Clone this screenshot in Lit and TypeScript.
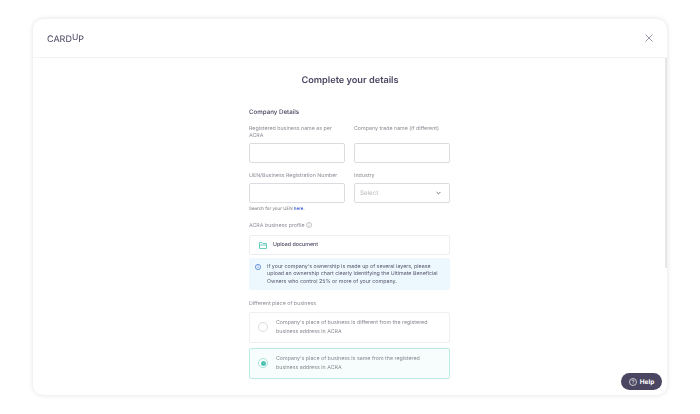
import { LitElement, html, css } from "lit";
import { customElement } from "lit/decorators.js";

@customElement("app-root")
export class AppRoot extends LitElement {
  static styles = css`
    :host { display: block; width: 700px; height: 414px; overflow: hidden; background: #fff; font-family: Inter, "Liberation Sans", sans-serif; color: #4a4560; position: relative; text-rendering: geometricPrecision; }
    .page { box-sizing: border-box; width: 700px; height: 414px; padding: 19px 33px; will-change: transform; }
    .modal { height: 376px; box-sizing: border-box; background: #fff; border-radius: 10px; box-shadow: 0 0 5px rgba(60,60,80,.16); display: flex; flex-direction: column; overflow: hidden; position: relative; }
    .head { height: 39px; flex: none; border-bottom: 1px solid #f3f3f5; box-sizing: border-box; display: flex; align-items: center; justify-content: space-between; padding: 0 14px; }
    .logo { font-size: 9px; color: #4a4560; display: flex; align-items: flex-start; line-height: 10px; font-weight: 400; padding-top: 3px; }
    .logo .u { transform: translateY(-2.500px); display: inline-block; font-size: 8.500px; }
    .close { display: block; }
    .scroll { flex: 1; position: relative; overflow: hidden; padding: 16px 0 0 216px; box-sizing: border-box; }
    .bar { position: absolute; right: 0; top: 0; width: 2px; height: 210px; background: #e6e6e8; }
    h1 { position: absolute; left: 0; right: 0; top: 16px; margin: 0; text-align: center; font-size: 9.200px; font-weight: 600; line-height: 14px; color: #4a4560; }
    .form { width: 201px; padding-top: 34px; }
    h2 { margin: 0 0 7.500px; font-size: 6.200px; font-weight: 500; line-height: 10px; color: #4a4560; }
    .grid { display: grid; grid-template-columns: 96px 96px; column-gap: 9px; }
    .field { display: flex; flex-direction: column; justify-content: flex-end; }
    .field.top { justify-content: space-between; }
    .label { font-size: 5.300px; line-height: 7.500px; color: #8a8a94; margin-bottom: 2.500px; }
    .input { height: 20px; box-sizing: border-box; border: 1px solid #dcdce0; border-radius: 2px; background: #fff; }
    .row2 { margin-top: 9.500px; }
    .select { display: flex; align-items: center; justify-content: space-between; padding: 1px 8px 0 5px; font-size: 6.200px; color: #b8b8bd; }
    .hint { font-size: 4.500px; line-height: 7px; color: #77777f; margin-top: 3px; }
    .hint a { color: #3d5bd0; font-weight: 500; }
    .acra { display: flex; align-items: center; gap: 1px; font-size: 5.300px; line-height: 8px; color: #8a8a94; margin-top: 9px; margin-bottom: 5px; }
    .acra svg { transform: translateY(-1px); }
    .upload { height: 20px; box-sizing: border-box; border: 1px solid #eeeef0; border-radius: 2px; display: flex; align-items: center; gap: 6px; padding: 1px 0 0 9px; font-size: 5.300px; font-weight: 500; color: #4a4560; }
    .info { margin-top: 3px; background: #ecf8fd; border-radius: 2px; height: 32px; box-sizing: border-box; padding: 6px 8px 0 6px; display: flex; gap: 6px; font-size: 5.300px; line-height: 7.500px; color: #55556a; }
    .info svg { flex: none; }
    .diff { font-size: 5.300px; line-height: 8px; color: #8a8a94; margin-top: 10px; margin-bottom: 4px; }
    .card { height: 31px; box-sizing: border-box; border: 1px solid #efeff1; border-radius: 2px; display: flex; align-items: center; gap: 8px; padding: 0 20px 0 8px; font-size: 5.300px; line-height: 9px; color: #85858f; margin-bottom: 5px; }
    .card .txt { padding-top: 1.500px; }
    .card.on { border-color: #bdeae3; background: #f7fdfc; }
    .radio { width: 10px; height: 10px; border-radius: 50%; border: 1px solid #dcdce0; box-sizing: border-box; flex: none; background: #fff; display: flex; align-items: center; justify-content: center; }
    .on .radio { border-color: #a5e3da; }
    .on .radio::after { content: ""; width: 5px; height: 5px; border-radius: 50%; background: #4fc4b2; }
    .help { position: absolute; left: 621px; top: 373px; width: 41px; height: 17px; border-radius: 9px; background: #4a4560; color: #fff; display: flex; align-items: center; justify-content: center; gap: 3px; font-size: 6.500px; font-weight: 700; }
  `;

  render() {
    return html`
      <div class="page">
        <div class="modal">
          <div class="head">
            <div class="logo">CARD<span class="u">U</span>P</div>
            <svg class="close" width="8" height="8" viewBox="0 0 8 8" fill="none" stroke="#7b7b90" stroke-width=".8"><path d="M.5.5l7 7M7.500.5l-7 7"/></svg>
          </div>
          <div class="scroll">
            <div class="bar"></div>
            <h1>Complete your details</h1>
            <div class="form">
              <h2>Company Details</h2>
              <div class="grid">
                <div class="field"><div class="label">Registered business name as per ACRA</div><div class="input"></div></div>
                <div class="field top"><div class="label">Company trade name (if different)</div><div class="input"></div></div>
              </div>
              <div class="grid row2">
                <div class="field"><div class="label">UEN/Business Registration Number</div><div class="input"></div></div>
                <div class="field"><div class="label">Industry</div>
                  <div class="input select">Select
                    <svg width="5" height="4" viewBox="0 0 5 4" fill="none" stroke="#6a6a76" stroke-width=".9"><path d="M.6 1l1.900 1.900L4.400 1"/></svg>
                  </div>
                </div>
              </div>
              <div class="hint">Search for your UEN <a>here</a>.</div>
              <div class="acra">ACRA business profile
                <svg width="6" height="6" viewBox="0 0 6 6" fill="none" stroke="#8a8a94" stroke-width=".5"><circle cx="3" cy="3" r="2.500"/><path d="M3 2.700v1.500M3 1.500v.5"/></svg>
              </div>
              <div class="upload">
                <svg width="8" height="7" viewBox="0 0 8 7" fill="none" stroke="#5fc9b8" stroke-width=".9"><path d="M.5.500h2.500l.8 1h3.700v5H.5zM.5 3h7"/></svg>
                Upload document
              </div>
              <div class="info">
                <svg width="6" height="6" viewBox="0 0 6 6" fill="none" stroke="#3f6fd8" stroke-width=".7"><circle cx="3" cy="3" r="2.600"/><path d="M3 2.600v1.500M3 1.400v.5"/></svg>
                <div>If your company's ownership is made up of several layers, please upload an ownership chart clearly identifying the Ultimate Beneficial Owners who control 25% or more of your company.</div>
              </div>
              <div class="diff">Different place of business</div>
              <div class="card"><span class="radio"></span><div class="txt">Company's place of business is different from the registered business address in ACRA</div></div>
              <div class="card on"><span class="radio"></span><div class="txt">Company's place of business is same from the registered business address in ACRA</div></div>
            </div>
          </div>
        </div>
      </div>
      <div class="help">
        <svg width="8" height="8" viewBox="0 0 8 8" fill="none" stroke="#fff" stroke-width=".7"><circle cx="4" cy="4" r="3.500"/><path d="M2.900 3.100c0-1.400 2.200-1.400 2.200 0 0 .8-1.100.8-1.100 1.600M4 5.500v.6"/></svg>
        Help
      </div>
    `;
  }
}
